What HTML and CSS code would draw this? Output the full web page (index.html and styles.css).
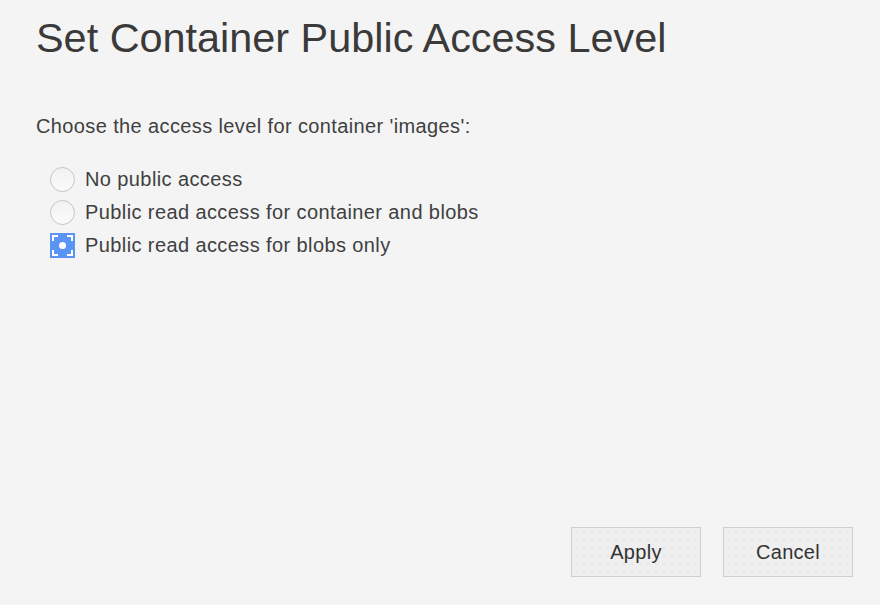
FILE: index.html
```html
<!DOCTYPE html>
<html>
<head>
<meta charset="utf-8">
<link rel="stylesheet" href="styles.css">
</head>
<body>
<div class="dialog">
  <h1 class="title">Set Container Public Access Level</h1>
  <p class="prompt">Choose the access level for container 'images':</p>
  <div class="options">
    <label class="option"><span class="radio"></span><span class="label">No public access</span></label>
    <label class="option"><span class="radio"></span><span class="label">Public read access for container and blobs</span></label>
    <label class="option"><span class="radio selected"><span class="dot"></span><span class="corner tl"></span><span class="corner tr"></span><span class="corner bl"></span><span class="corner br"></span></span><span class="label">Public read access for blobs only</span></label>
  </div>
  <div class="spacer"></div>
  <div class="buttons">
    <button class="btn">Apply</button>
    <button class="btn">Cancel</button>
  </div>
</div>
</body>
</html>
```
FILE: styles.css
```css
html, body {
  margin: 0;
  padding: 0;
  background: #f4f4f4;
}
body {
  font-family: "Liberation Sans", Arial, sans-serif;
  color: #3a3a3a;
}
.dialog {
  width: 880px;
  height: 605px;
  box-sizing: border-box;
  padding: 12px 27px 28px 36px;
  display: flex;
  flex-direction: column;
}
.title {
  margin: 0;
  font-weight: normal;
  font-size: 41.4px;
  line-height: 52px;
  color: #3a3a3a;
}
.prompt {
  margin: 50px 0 0 0;
  font-size: 20px;
  line-height: 24px;
  letter-spacing: 0.38px;
  color: #404040;
}
.options {
  margin: 29px 0 0 14px;
  display: flex;
  flex-direction: column;
  gap: 8px;
}
.option {
  display: flex;
  align-items: center;
  gap: 10px;
  height: 25px;
  font-size: 20px;
  letter-spacing: 0.4px;
  color: #404040;
}
.radio {
  width: 25px;
  height: 25px;
  box-sizing: border-box;
  border: 1px solid #c6c6c6;
  border-radius: 50%;
  background: linear-gradient(#f2f2f2, #fbfbfb);
  position: relative;
  flex: none;
}
.radio.selected {
  border-radius: 0;
  border: none;
  background: #5a95f5;
}
.dot {
  position: absolute;
  left: 9px;
  top: 9px;
  width: 7px;
  height: 7px;
  border-radius: 50%;
  background: #fff;
}
.corner {
  position: absolute;
  width: 4px;
  height: 4px;
  border: 0 solid #fff;
}
.tl { left: 2px; top: 2px; border-left-width: 2px; border-top-width: 2px; }
.tr { right: 2px; top: 2px; border-right-width: 2px; border-top-width: 2px; }
.bl { left: 2px; bottom: 2px; border-left-width: 2px; border-bottom-width: 2px; }
.br { right: 2px; bottom: 2px; border-right-width: 2px; border-bottom-width: 2px; }
.spacer { flex: 1; }
.buttons {
  display: flex;
  justify-content: flex-end;
  gap: 22px;
}
.btn {
  width: 130px;
  height: 50px;
  font-family: "Liberation Sans", Arial, sans-serif;
  font-size: 20px;
  letter-spacing: 0.3px;
  color: #333;
  background-color: #efeff0;
  background-image: radial-gradient(circle, #dedede 0.6px, transparent 0.8px);
  background-size: 8px 8px;
  border: 1px solid #cfcfcf;
  border-radius: 0;
  padding: 0;
}
```
